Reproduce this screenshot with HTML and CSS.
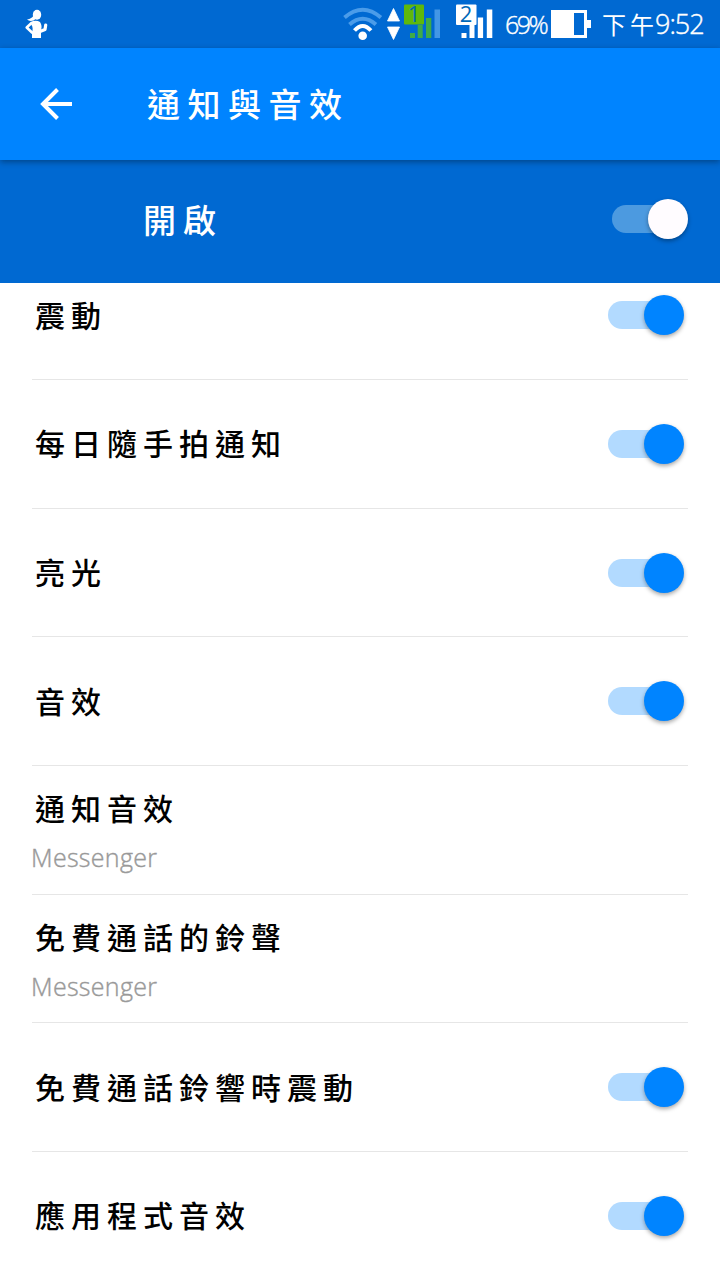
FILE: index.html
```html
<!DOCTYPE html>
<html lang="zh-Hant">
<head>
    <meta charset="UTF-8">
    <meta name="viewport" content="width=device-width, initial-scale=1.0">
    <title>通知與音效</title>
    <link rel="stylesheet" href="styles.css">
</head>
<body>
    <div class="status-bar">
        <svg class="runner" width="24" height="30" viewBox="0 0 24 30">
            <ellipse cx="12" cy="5.800" rx="4.200" ry="5" fill="#fff"/>
            <path d="M8.500 6.500 Q7 9.500 2 10.500 Q4.500 12.800 8.500 11.500 L12 9 Z" fill="#fff"/>
            <path d="M5.500 13 Q11 10.500 15 13 Q17.500 17 16 21 V29 H7 V23.500 Q8.500 19 6.500 16 Z" fill="#fff"/>
            <path d="M6.500 14 L1.700 18.500 L7.500 24" fill="none" stroke="#fff" stroke-width="2.600" stroke-linejoin="round"/>
            <path d="M15 22.500 L20 20.500 L20.700 16" fill="none" stroke="#fff" stroke-width="3.200" stroke-linecap="round" stroke-linejoin="round"/>
        </svg>

        <div class="status-right">
            <svg class="wifi" width="40" height="36" viewBox="0 0 40 36">
                <g fill="none" stroke-width="4">
                    <path d="M1.500 11.500 Q19.700 -4 37.900 11.500" stroke="#4b9ce9"/>
                    <path d="M6.500 18.500 Q19.700 7 32.900 18.500" stroke="#4b9ce9"/>
                    <path d="M11.500 24.500 Q19.700 15.500 27.900 24.500" stroke="#fff"/>
                </g>
                <circle cx="19.700" cy="29.700" r="4.300" fill="#fff"/>
            </svg>
            <svg class="arrows" width="13" height="36" viewBox="0 0 13 36">
                <path d="M6.500 2.500 L12.500 15 H0.500 Z M0.500 21 H12.500 L6.500 33.500 Z" fill="#fff" stroke="#fff" stroke-width="0.800" stroke-linejoin="round"/>
            </svg>
            <svg class="sim-one" width="37" height="36" viewBox="0 0 37 36">
                <g fill="#3faa48">
                    <rect x="6" y="27" width="5" height="5"/>
                    <rect x="13.700" y="19" width="5" height="13"/>
                    <rect x="22" y="12" width="5.300" height="20"/>
                </g>
                <rect x="30.500" y="3.500" width="5.500" height="28.500" fill="#4397e6"/>
                <rect x="0" y="-1.500" width="20" height="20" rx="1" fill="#5fb80b"/>
                <text x="10" y="16" class="sim-number">1</text>
            </svg>
            <svg class="sim-two" width="37" height="36" viewBox="0 0 37 36">
                <g fill="#fff">
                    <rect x="5.500" y="27" width="5" height="5"/>
                    <rect x="13.500" y="19" width="5" height="13"/>
                    <rect x="21.800" y="11.500" width="5.300" height="20.500"/>
                    <rect x="30.800" y="3.500" width="5.500" height="28.500"/>
                    <rect x="0" y="-1.500" width="20.500" height="20.500" rx="1"/>
                </g>
                <text x="10" y="16" class="sim-number">2</text>
            </svg>
            <span class="percent">69%</span>
            <svg class="battery" width="41" height="28" viewBox="0 0 41 28">
                <path d="M0 0 H36 V10 H40 V18 H36 V28 H0 Z" fill="#fff"/>
                <rect x="23" y="3" width="10" height="22" fill="#0069d2"/>
            </svg>
            <span class="period">下午</span>
            <span class="clock">9:52</span>
        </div>
    </div>

    <header class="toolbar">
        <svg class="back" width="32" height="32" viewBox="0 0 32 32">
            <path d="M32 16 H3 M17.500 1.500 L3 16 L17.500 30.500" fill="none" stroke="#fff" stroke-width="4"/>
        </svg>
        <h1 class="title">通知與音效</h1>
    </header>

    <section class="master">
        <span class="master-label">開啟</span>
        <span class="switch switch-light"><span class="knob"></span></span>
    </section>

    <main class="settings">
        <ul class="list">
            <li class="row">
                <span class="label">震動</span>
                <span class="switch"><span class="knob"></span></span>
            </li>
            <li class="row">
                <span class="label">每日隨手拍通知</span>
                <span class="switch"><span class="knob"></span></span>
            </li>
            <li class="row">
                <span class="label">亮光</span>
                <span class="switch"><span class="knob"></span></span>
            </li>
            <li class="row">
                <span class="label">音效</span>
                <span class="switch"><span class="knob"></span></span>
            </li>
            <li class="row row-double">
                <span class="label">通知音效</span>
                <span class="value">Messenger</span>
            </li>
            <li class="row row-double">
                <span class="label">免費通話的鈴聲</span>
                <span class="value">Messenger</span>
            </li>
            <li class="row">
                <span class="label">免費通話鈴響時震動</span>
                <span class="switch"><span class="knob"></span></span>
            </li>
            <li class="row">
                <span class="label">應用程式音效</span>
                <span class="switch"><span class="knob"></span></span>
            </li>
        </ul>
    </main>
</body>
</html>
```
FILE: styles.css
```css
* {
    box-sizing: border-box;
    margin: 0;
    padding: 0;
}

body {
    width: 720px;
    height: 1280px;
    display: flex;
    flex-direction: column;
    overflow: hidden;
    background: #fff;
    color: #000;
    font-family: "Noto Sans CJK TC", sans-serif;
}

svg {
    display: block;
    flex: none;
    overflow: visible;
}

/* Status bar */
.status-bar {
    height: 48px;
    flex: none;
    display: flex;
    justify-content: space-between;
    align-items: center;
    padding: 0 15px 0 25px;
    background: #0069d2;
    color: #fff;
}

.status-right {
    display: flex;
    align-items: center;
}

.wifi {
    margin-right: 4px;
}

.arrows {
    margin-right: 4px;
}

.sim-one {
    margin-right: 15px;
}

.sim-two {
    margin-right: 12px;
}

.sim-number {
    font-family: "Open Sans", sans-serif;
    font-size: 22px;
    text-anchor: middle;
    fill: #0069b8;
}

.percent,
.clock {
    font-family: "Open Sans", sans-serif;
    font-size: 27px;
    font-weight: 300;
    line-height: 48px;
    white-space: nowrap;
    -webkit-text-stroke: 0.4px #fff;
}

.percent {
    width: 41px;
    margin-right: 5px;
    font-size: 25px;
    letter-spacing: -2.5px;
}

.battery {
    margin-right: 10px;
}

.period {
    width: 53px;
    font-size: 24px;
    font-weight: 400;
    line-height: 44px;
    letter-spacing: 4px;
    white-space: nowrap;
}

.clock {
    width: 50px;
    letter-spacing: -1px;
}

/* Toolbar */
.toolbar {
    position: relative;
    z-index: 1;
    height: 112px;
    flex: none;
    display: flex;
    align-items: center;
    padding-left: 40px;
    background: #0084ff;
    color: #fff;
    box-shadow: 0 2px 6px rgba(0, 0, 0, 0.35);
}

.title {
    margin-left: 75px;
    padding-bottom: 2px;
    font-size: 33px;
    font-weight: 500;
    line-height: 48px;
    letter-spacing: 7.5px;
}

.master {
    height: 122.5px;
    flex: none;
    display: flex;
    justify-content: space-between;
    align-items: center;
    padding: 0 32px 4px 143px;
    background: #0069d2;
    color: #fff;
}

.master-label {
    font-size: 33px;
    font-weight: 500;
    letter-spacing: 7px;
}

/* Switches */
.switch {
    width: 76px;
    height: 28px;
    flex: none;
    display: flex;
    align-items: center;
    justify-content: flex-end;
    border-radius: 14px;
    background: linear-gradient(to right, #b2daff 56px, transparent 56px);
}

.knob {
    width: 40px;
    height: 40px;
    flex: none;
    border-radius: 50%;
    background: #0084ff;
    box-shadow: 0 2px 4px rgba(0, 0, 0, 0.35);
}

.switch-light {
    background: linear-gradient(to right, #4c9ae0 56px, transparent 56px);
}

.switch-light .knob {
    background: #fffcff;
}

/* Settings list, scrolled slightly under the header */
.settings {
    flex: 1;
    overflow: hidden;
}

.list {
    margin: -31px 32px 0;
    list-style: none;
}

.row {
    height: 128.66px;
    display: flex;
    justify-content: space-between;
    align-items: center;
    padding: 0 4px 0 3px;
    border-bottom: 1px solid #e6e6e6;
}

.label {
    padding-bottom: 3px;
    font-size: 30px;
    font-weight: 500;
    line-height: 44px;
    letter-spacing: 6px;
}

.row-double {
    flex-direction: column;
    justify-content: flex-start;
    align-items: flex-start;
    padding-top: 19px;
}

.value {
    margin: 7px 0 0 -4px;
    color: #999;
    font-family: "Open Sans", sans-serif;
    font-size: 25px;
    font-weight: 300;
    line-height: 36px;
    letter-spacing: 0.3px;
    -webkit-text-stroke: 0.4px #999;
}
```
